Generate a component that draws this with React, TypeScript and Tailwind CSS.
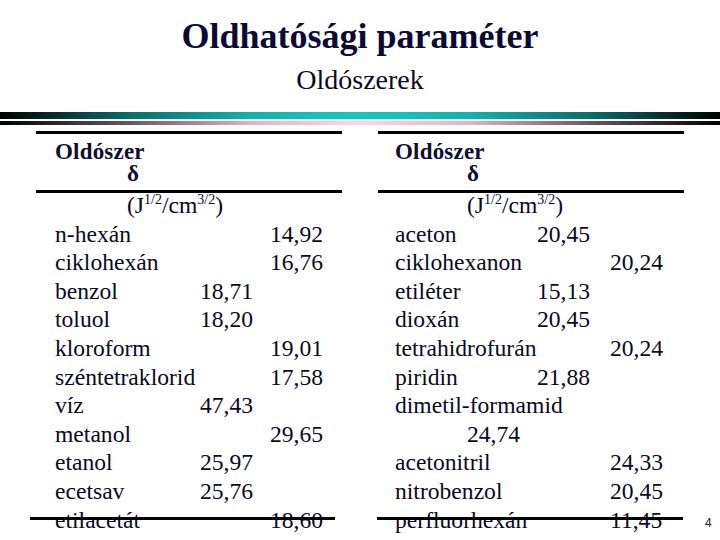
import React from "react";

type Row = [string, string, string];

const left: Row[] = [
  ["n-hexán", "", "14,92"],
  ["ciklohexán", "", "16,76"],
  ["benzol", "18,71", ""],
  ["toluol", "18,20", ""],
  ["kloroform", "", "19,01"],
  ["széntetraklorid", "", "17,58"],
  ["víz", "47,43", ""],
  ["metanol", "", "29,65"],
  ["etanol", "25,97", ""],
  ["ecetsav", "25,76", ""],
  ["etilacetát", "", "18,60"],
];

const right: Row[] = [
  ["aceton", "20,45", ""],
  ["ciklohexanon", "", "20,24"],
  ["etiléter", "15,13", ""],
  ["dioxán", "20,45", ""],
  ["tetrahidrofurán", "", "20,24"],
  ["piridin", "21,88", ""],
];

const right2: Row[] = [
  ["acetonitril", "", "24,33"],
  ["nitrobenzol", "", "20,45"],
  ["perfluorhexán", "", "11,45"],
];

function Unit() {
  return (
    <div className="pl-[72px] -mt-[2px] whitespace-nowrap">
      (J<sup className="text-[14px] relative -top-[9px]">1/2</sup>/cm
      <sup className="text-[14px] relative -top-[9px]">3/2</sup>)
    </div>
  );
}

function Header({ pad }: { pad: string }) {
  return (
    <div className={"border-t-[3px] border-b-[3px] border-black pt-[7px] pb-[5px] font-bold text-[23px] leading-[22px] text-[#0d0d30] " + pad}>
      <div className="tracking-[0.2px]">Oldószer</div>
      <div className="pl-[72px]">δ</div>
    </div>
  );
}

export default function App() {
  return (
    <div className="relative w-[720px] h-[540px] overflow-hidden bg-white text-[#0a0a1e] font-['Liberation_Serif','Times_New_Roman',serif]">
      <div className="h-[112px] flex flex-col items-center pt-[16px]">
        <div className="text-[36px] leading-[40px] font-bold text-[#0a0a36]">Oldhatósági paraméter</div>
        <div className="mt-[8px] text-[28px] leading-[32px] text-[#0a0a1e]">Oldószerek</div>
      </div>
      <div className="h-[7px] bg-[linear-gradient(90deg,#000_0%,#0a6e6b_18%,#11b4ae_35%,#14c8c2_50%,#11b4ae_65%,#0a6e6b_82%,#000_100%)]" />
      <div className="h-[2px]" />
      <div className="h-[4px] bg-[linear-gradient(90deg,#000_0%,#6a5468_18%,#d6b6d4_35%,#f6d8f2_50%,#d6b6d4_65%,#6a5468_82%,#000_100%)]" />
      <div className="flex mt-[6px] pl-[36px] gap-[36px]">
        <div className="w-[306px]">
          <Header pad="pl-[19px]" />
          <div className="pl-[19px] text-[23.6px] leading-[28.6px]">
            <Unit />
            {left.map(([n, a, b]) => (
              <div key={n} className="grid grid-cols-[145px_70px_1fr] whitespace-nowrap">
                <span>{n}</span>
                <span>{a}</span>
                <span>{b}</span>
              </div>
            ))}
          </div>
        </div>
        <div className="w-[306px]">
          <Header pad="pl-[17px]" />
          <div className="pl-[17px] text-[23.6px] leading-[28.6px]">
            <Unit />
            {right.map(([n, a, b]) => (
              <div key={n} className="grid grid-cols-[142px_73px_1fr] whitespace-nowrap">
                <span>{n}</span>
                <span>{a}</span>
                <span>{b}</span>
              </div>
            ))}
            <div className="whitespace-nowrap">dimetil-formamid</div>
            <div className="pl-[72px]">24,74</div>
            {right2.map(([n, a, b]) => (
              <div key={n} className="grid grid-cols-[142px_73px_1fr] whitespace-nowrap">
                <span>{n}</span>
                <span>{a}</span>
                <span>{b}</span>
              </div>
            ))}
            <div className="whitespace-nowrap">dimetil-szulfoxid</div>
          </div>
        </div>
      </div>
      <div className="absolute left-[30px] top-[517px] w-[305px] h-[3px] bg-black" />
      <div className="absolute left-[377px] top-[517px] w-[306px] h-[3px] bg-black" />
      <div className="absolute left-[705px] top-[517px] text-[12px] leading-[12px] text-[#222] font-['Liberation_Sans',Arial,sans-serif]">
        4
      </div>
    </div>
  );
}
